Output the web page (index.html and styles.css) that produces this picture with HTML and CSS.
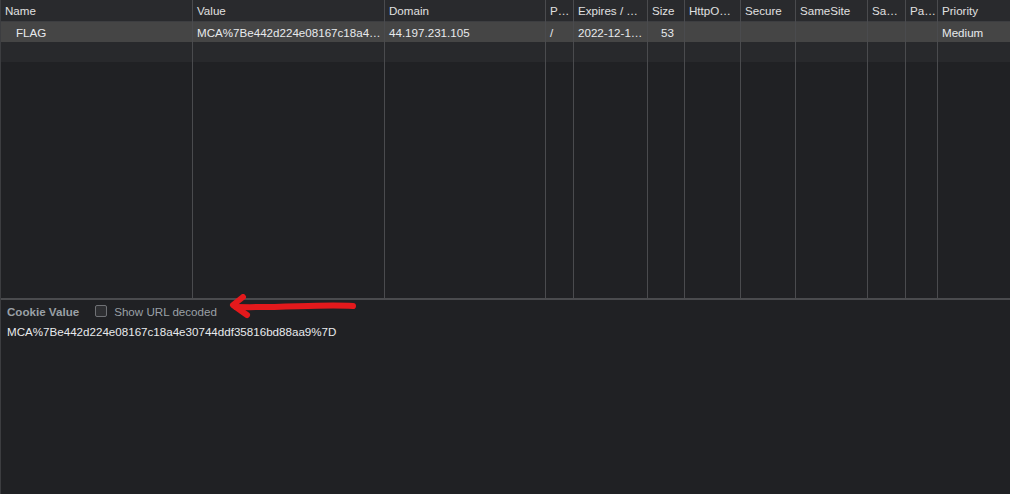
FILE: index.html
```html
<!DOCTYPE html>
<html>
<head>
<meta charset="utf-8">
<link rel="stylesheet" href="styles.css">
</head>
<body>
<div class="app">
  <div class="grid">
    <div class="col w-name">
      <div class="cell head">Name</div>
      <div class="cell sel indent">FLAG</div>
      <div class="cell stripe"></div>
    </div>
    <div class="col w-value">
      <div class="cell head">Value</div>
      <div class="cell sel">MCA%7Be442d224e08167c18a4…</div>
      <div class="cell stripe"></div>
    </div>
    <div class="col w-domain">
      <div class="cell head">Domain</div>
      <div class="cell sel">44.197.231.105</div>
      <div class="cell stripe"></div>
    </div>
    <div class="col w-path">
      <div class="cell head">P…</div>
      <div class="cell sel">/</div>
      <div class="cell stripe"></div>
    </div>
    <div class="col w-exp">
      <div class="cell head">Expires / …</div>
      <div class="cell sel">2022-12-1…</div>
      <div class="cell stripe"></div>
    </div>
    <div class="col w-size">
      <div class="cell head">Size</div>
      <div class="cell sel right">53</div>
      <div class="cell stripe"></div>
    </div>
    <div class="col w-http">
      <div class="cell head">HttpO…</div>
      <div class="cell sel"></div>
      <div class="cell stripe"></div>
    </div>
    <div class="col w-secure">
      <div class="cell head">Secure</div>
      <div class="cell sel"></div>
      <div class="cell stripe"></div>
    </div>
    <div class="col w-same">
      <div class="cell head">SameSite</div>
      <div class="cell sel"></div>
      <div class="cell stripe"></div>
    </div>
    <div class="col w-sa">
      <div class="cell head">Sa…</div>
      <div class="cell sel"></div>
      <div class="cell stripe"></div>
    </div>
    <div class="col w-pa">
      <div class="cell head">Pa…</div>
      <div class="cell sel"></div>
      <div class="cell stripe"></div>
    </div>
    <div class="col w-prio last">
      <div class="cell head">Priority</div>
      <div class="cell sel">Medium</div>
      <div class="cell stripe"></div>
    </div>
  </div>
  <div class="panel">
    <div class="panel-bar">
      <span class="panel-title">Cookie Value</span>
      <label class="decode"><span class="box"></span>Show URL decoded</label>
    </div>
    <div class="panel-value">MCA%7Be442d224e08167c18a4e30744ddf35816bd88aa9%7D</div>
    <svg class="arrow" width="140" height="28" viewBox="222 294 140 28">
      <path d="M353 306 C 320 304, 285 308, 236 307" fill="none" stroke="#e4191c" stroke-width="6" stroke-linecap="round" stroke-linejoin="round"/>
      <path d="M243 297 L 233 305 L 247 315" fill="none" stroke="#e4191c" stroke-width="6" stroke-linecap="round" stroke-linejoin="round"/>
    </svg>
  </div>
</div>
</body>
</html>
```

FILE: styles.css
```css
html, body {
  margin: 0;
  padding: 0;
  background: #202124;
}
body {
  font-family: "Liberation Sans", Arial, sans-serif;
  font-size: 11.6px;
  color: #e3e3e3;
}
.app {
  width: 1010px;
  height: 494px;
  display: flex;
  flex-direction: column;
  border-left: 1px solid #3c3d40;
  box-sizing: border-box;
}
.grid {
  height: 298px;
  display: flex;
  flex: none;
}
.col {
  display: flex;
  flex-direction: column;
  border-right: 1px solid #4a4b4e;
  box-sizing: border-box;
  flex: none;
}
.col.last { border-right: none; flex: 1; }
.w-name { width: 192px; }
.w-value { width: 192px; }
.w-domain { width: 161px; }
.w-path { width: 28px; }
.w-exp { width: 74px; }
.w-size { width: 37px; }
.w-http { width: 56px; }
.w-secure { width: 55px; }
.w-same { width: 72px; }
.w-sa { width: 38px; }
.w-pa { width: 32px; }
.cell {
  height: 20px;
  line-height: 22px;
  padding: 0 4px;
  white-space: nowrap;
  overflow: hidden;
}
.head {
  height: 21px;
  line-height: 22px;
  background: #292a2d;
  border-bottom: 1px solid #3d3e41;
  color: #e0e0e0;
}
.sel {
  background: #454545;
  color: #e8eaed;
}
.stripe {
  background: #28292c;
}
.indent { padding-left: 15px; }
.right { text-align: right; padding-right: 10px; }
.panel {
  position: relative;
  flex: 1;
  border-top: 2px solid #4a4b4e;
}
.panel-bar {
  display: flex;
  align-items: center;
  height: 22px;
  padding: 0 0 0 6px;
}
.panel-title {
  color: #9aa0a6;
  font-weight: bold;
}
.decode {
  display: flex;
  align-items: center;
  margin-left: 16px;
  color: #9aa0a6;
}
.box {
  width: 10px;
  height: 10px;
  border: 1px solid #6f7175;
  border-radius: 2px;
  background: #2e2f32;
  margin-right: 7px;
}
.panel-value {
  padding: 0 0 0 6px;
  line-height: 20px;
  color: #e8eaed;
}
.arrow {
  position: absolute;
  left: 221px;
  top: -6px;
}
```
